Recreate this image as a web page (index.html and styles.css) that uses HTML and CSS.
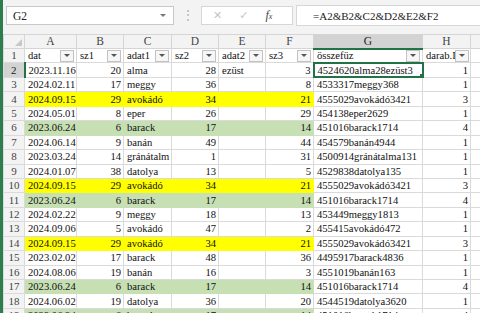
FILE: index.html
```html
<!DOCTYPE html>
<html lang="hu">
<head>
  <meta charset="UTF-8">
  <title>Munkafüzet</title>
  <link rel="stylesheet" href="styles.css">
</head>
<body>
  <div class="app">
    <div class="formula-bar">
      <div class="namebox"><span>G2</span><span class="caret"></span></div>
      <div class="grip">⋮</div>
      <div class="fx-buttons">
        <span class="btn-x">✕</span>
        <span class="btn-ok">✓</span>
        <span class="fx">f<small>x</small></span>
      </div>
      <div class="formula">=A2&amp;B2&amp;C2&amp;D2&amp;E2&amp;F2</div>
    </div>

    <table class="sheet">
      <colgroup>
        <col class="c-row"><col class="c-a"><col class="c-b"><col class="c-c"><col class="c-d">
        <col class="c-e"><col class="c-f"><col class="c-g"><col class="c-h"><col class="c-i">
      </colgroup>
      <thead>
        <tr>
          <th class="corner"><span class="corner-tri"></span></th>
          <th>A</th><th>B</th><th>C</th><th>D</th><th>E</th><th>F</th>
          <th class="sel-col">G</th><th>H</th><th></th>
        </tr>
      </thead>
      <tbody>
        <tr>
          <th>1</th>
          <td><div class="filter"><span>dat</span><i></i></div></td>
          <td><div class="filter"><span>sz1</span><i></i></div></td>
          <td><div class="filter"><span>adat1</span><i></i></div></td>
          <td><div class="filter"><span>sz2</span><i></i></div></td>
          <td><div class="filter"><span>adat2</span><i></i></div></td>
          <td><div class="filter"><span>sz3</span><i></i></div></td>
          <td><div class="filter"><span>összefüz</span><i></i></div></td>
          <td class="tight"><div class="filter"><span>darab.I</span><i></i></div></td>
          <td></td>
        </tr>
        <tr>
          <th class="sel-row">2</th>
          <td>2023.11.16</td><td class="n">20</td><td>alma</td><td class="n">28</td><td>ezüst</td><td class="n">3</td>
          <td class="active">4524620alma28ezüst3</td><td class="n">1</td><td></td>
        </tr>
        <tr>
          <th>3</th>
          <td>2024.02.11</td><td class="n">17</td><td>meggy</td><td class="n">36</td><td></td><td class="n">8</td>
          <td>4533317meggy368</td><td class="n">1</td><td></td>
        </tr>
        <tr class="yellow">
          <th>4</th>
          <td>2024.09.15</td><td class="n">29</td><td>avokádó</td><td class="n">34</td><td></td><td class="n">21</td>
          <td>4555029avokádó3421</td><td class="n">3</td><td></td>
        </tr>
        <tr>
          <th>5</th>
          <td>2024.05.01</td><td class="n">8</td><td>eper</td><td class="n">26</td><td></td><td class="n">29</td>
          <td>454138eper2629</td><td class="n">1</td><td></td>
        </tr>
        <tr class="green">
          <th>6</th>
          <td>2023.06.24</td><td class="n">6</td><td>barack</td><td class="n">17</td><td></td><td class="n">14</td>
          <td>451016barack1714</td><td class="n">4</td><td></td>
        </tr>
        <tr>
          <th>7</th>
          <td>2024.06.14</td><td class="n">9</td><td>banán</td><td class="n">49</td><td></td><td class="n">44</td>
          <td>454579banán4944</td><td class="n">1</td><td></td>
        </tr>
        <tr>
          <th>8</th>
          <td>2023.03.24</td><td class="n">14</td><td>gránátalm</td><td class="n">1</td><td></td><td class="n">31</td>
          <td>4500914gránátalma131</td><td class="n">1</td><td></td>
        </tr>
        <tr>
          <th>9</th>
          <td>2024.01.07</td><td class="n">38</td><td>datolya</td><td class="n">13</td><td></td><td class="n">5</td>
          <td>4529838datolya135</td><td class="n">1</td><td></td>
        </tr>
        <tr class="yellow">
          <th>10</th>
          <td>2024.09.15</td><td class="n">29</td><td>avokádó</td><td class="n">34</td><td></td><td class="n">21</td>
          <td>4555029avokádó3421</td><td class="n">3</td><td></td>
        </tr>
        <tr class="green">
          <th>11</th>
          <td>2023.06.24</td><td class="n">6</td><td>barack</td><td class="n">17</td><td></td><td class="n">14</td>
          <td>451016barack1714</td><td class="n">4</td><td></td>
        </tr>
        <tr>
          <th>12</th>
          <td>2024.02.22</td><td class="n">9</td><td>meggy</td><td class="n">18</td><td></td><td class="n">13</td>
          <td>453449meggy1813</td><td class="n">1</td><td></td>
        </tr>
        <tr>
          <th>13</th>
          <td>2024.09.06</td><td class="n">5</td><td>avokádó</td><td class="n">47</td><td></td><td class="n">2</td>
          <td>455415avokádó472</td><td class="n">1</td><td></td>
        </tr>
        <tr class="yellow">
          <th>14</th>
          <td>2024.09.15</td><td class="n">29</td><td>avokádó</td><td class="n">34</td><td></td><td class="n">21</td>
          <td>4555029avokádó3421</td><td class="n">3</td><td></td>
        </tr>
        <tr>
          <th>15</th>
          <td>2023.02.02</td><td class="n">17</td><td>barack</td><td class="n">48</td><td></td><td class="n">36</td>
          <td>4495917barack4836</td><td class="n">1</td><td></td>
        </tr>
        <tr>
          <th>16</th>
          <td>2024.08.06</td><td class="n">19</td><td>banán</td><td class="n">16</td><td></td><td class="n">3</td>
          <td>4551019banán163</td><td class="n">1</td><td></td>
        </tr>
        <tr class="green">
          <th>17</th>
          <td>2023.06.24</td><td class="n">6</td><td>barack</td><td class="n">17</td><td></td><td class="n">14</td>
          <td>451016barack1714</td><td class="n">4</td><td></td>
        </tr>
        <tr>
          <th>18</th>
          <td>2024.06.02</td><td class="n">19</td><td>datolya</td><td class="n">36</td><td></td><td class="n">20</td>
          <td>4544519datolya3620</td><td class="n">1</td><td></td>
        </tr>
        <tr class="green">
          <th>19</th>
          <td>2023.06.24</td><td class="n">6</td><td>barack</td><td class="n">17</td><td></td><td class="n">14</td>
          <td>451016barack1714</td><td class="n">4</td><td></td>
        </tr>
      </tbody>
    </table>
  </div>
</body>
</html>
```

FILE: styles.css
```css
body {
  margin: 0;
  font-family: "Liberation Serif", "Times New Roman", serif;
  background-color: #fff;
  overflow: hidden;
}

.app {
  height: 313px;
  border-left: 3px solid #2e7d4f;
  box-sizing: border-box;
  overflow: hidden;
}

/* formula bar */
.formula-bar {
  display: flex;
  align-items: center;
  height: 34px;
  padding: 0 0 3px 3px;
  box-sizing: border-box;
  background-color: #f3f3f3;
}

.namebox {
  display: flex;
  align-items: center;
  width: 168px;
  height: 19px;
  padding: 0 7px 0 6px;
  box-sizing: border-box;
  background-color: #fff;
  border: 1px solid #c8c8c8;
  font-size: 11.5px;
  color: #222;
}

.caret {
  margin-left: auto;
  border-left: 3px solid transparent;
  border-right: 3px solid transparent;
  border-top: 3px solid #777;
}

.grip {
  width: 27px;
  text-align: center;
  color: #b0b0b0;
  font-size: 12px;
}

.fx-buttons {
  display: flex;
  align-items: center;
  gap: 17px;
  width: 92px;
  height: 19px;
  padding-left: 11px;
  box-sizing: border-box;
  background-color: #fff;
  border: 1px solid #d6d6d6;
  font-family: "DejaVu Sans", sans-serif;
  font-size: 11px;
  color: #c4c4c4;
}

.fx {
  font-family: "Liberation Serif", serif;
  font-style: italic;
  font-size: 12px;
  color: #444;
}

.fx small {
  font-size: 8px;
}

.formula {
  flex: 1;
  display: flex;
  align-items: center;
  height: 19px;
  margin-left: 3px;
  padding-left: 16px;
  background-color: #fff;
  border: 1px solid #d6d6d6;
  border-right: none;
  font-size: 11px;
  color: #222;
}

/* grid */
.sheet {
  border-collapse: collapse;
  table-layout: fixed;
  width: 504px;
  font-size: 10.6px;
}

.c-row { width: 21px; }
.c-a { width: 52px; }
.c-b { width: 47px; }
.c-c { width: 48px; }
.c-d { width: 47px; }
.c-e { width: 47px; }
.c-f { width: 48px; }
.c-g { width: 109px; }
.c-h { width: 48px; }
.c-i { width: 37px; }

.sheet thead tr {
  height: 14px;
}

.sheet tbody tr {
  height: 14.45px;
}

.sheet th {
  padding: 0;
  background-color: #f3f3f3;
  border: 1px solid #d5d5d5;
  font-weight: normal;
  font-size: 11.5px;
  line-height: 11px;
  color: #444;
  text-align: center;
}

.sheet tbody th {
  font-size: 11px;
  border-color: #dadada;
}

.sheet .corner {
  position: relative;
}

.corner-tri {
  position: absolute;
  right: 2px;
  bottom: 2px;
  border-left: 7px solid transparent;
  border-bottom: 7px solid #c8c8c8;
}

.sheet th.sel-col {
  background-color: #d3d3d3;
  border-bottom: 2px solid #217346;
  color: #222;
}

.sheet th.sel-row {
  background-color: #d3d3d3;
  border-right: 2px solid #217346;
  color: #222;
}

.sheet td {
  padding: 0 2px 0 3px;
  border: 1px solid #dadada;
  white-space: nowrap;
  overflow: hidden;
  line-height: 11px;
  color: #111;
}

.sheet td.tight {
  padding-right: 1px;
}

.sheet td.n {
  text-align: right;
}

.yellow td:nth-child(-n+7) {
  background-color: #ffff00;
  border-color: #ffff00;
}

.green td:nth-child(-n+7) {
  background-color: #c6e0b4;
  border-color: #c6e0b4;
}

.sheet td.active {
  position: relative;
  border: 2px solid #217346;
}

.sheet td.active::after {
  content: "";
  position: absolute;
  right: -4px;
  bottom: -4px;
  width: 5px;
  height: 5px;
  background-color: #217346;
  border: 1px solid #fff;
}

/* filter buttons in the header row */
.filter {
  display: flex;
  align-items: center;
}

.filter span {
  flex: 1;
  min-width: 0;
  overflow: hidden;
  text-overflow: clip;
}

.filter i {
  flex: none;
  display: flex;
  align-items: center;
  justify-content: center;
  width: 12px;
  height: 10px;
  background-color: #f6f6f6;
  border: 1px solid #c2c2c2;
}

.filter i::before {
  content: "";
  border-left: 3px solid transparent;
  border-right: 3px solid transparent;
  border-top: 3px solid #555;
}
```
